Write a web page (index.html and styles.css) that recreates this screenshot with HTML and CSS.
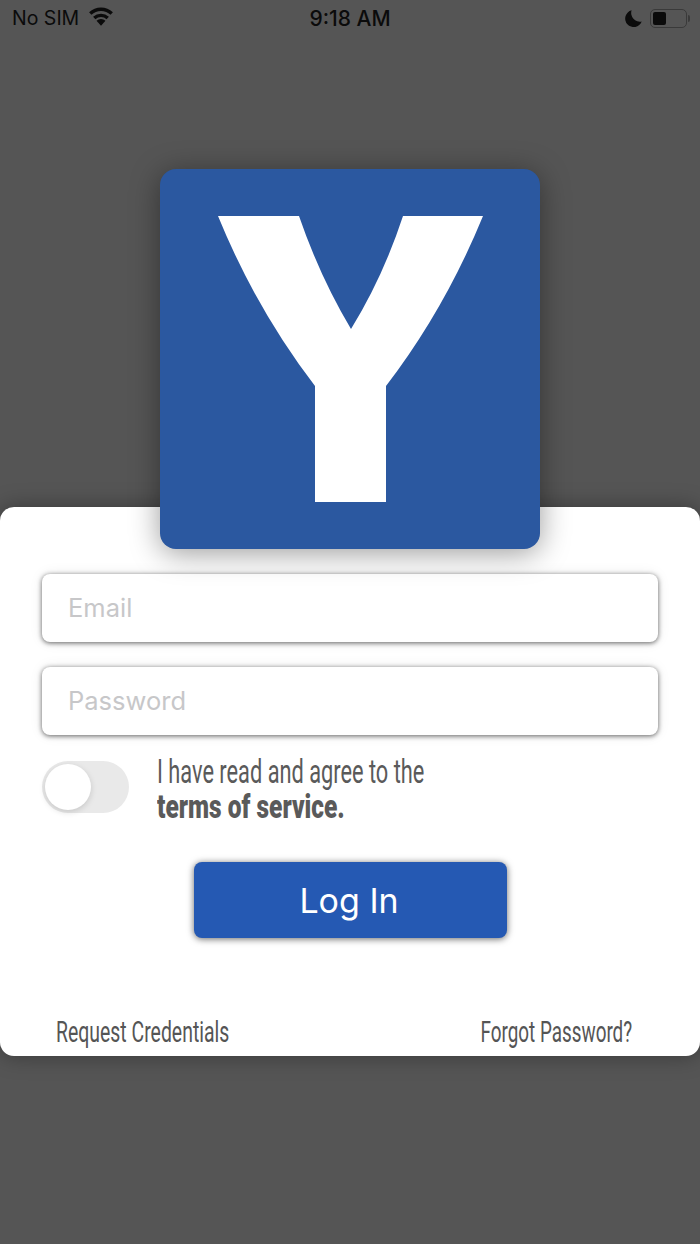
FILE: index.html
```html
<!DOCTYPE html>
<html lang="en">
<head>
  <meta charset="UTF-8">
  <title>Log In</title>
  <meta name="viewport" content="width=device-width, initial-scale=1.0">
  <link rel="stylesheet" href="styles.css">
</head>
<body>
<div class="status-bar">
  <div class="status-left">
    <span>No SIM</span>
    <svg class="wifi" width="26" height="19" viewBox="0 0 27 20">
      <path d="M13.5 19.8 L8.8 14.4 A7 7 0 0 1 18.2 14.4 Z" fill="#0b0b0b"/>
      <path d="M6.4 11.6 A10.4 10.4 0 0 1 20.6 11.6" fill="none" stroke="#0b0b0b" stroke-width="3.6"/>
      <path d="M2.2 6.9 A16.4 16.4 0 0 1 24.8 6.9" fill="none" stroke="#0b0b0b" stroke-width="3.6"/>
    </svg>
  </div>
  <div class="status-time">9:18 AM</div>
  <div class="status-right">
    <svg class="moon" width="17" height="17" viewBox="0 0 16 16">
      <path d="M6.2 0.3 A8 8 0 1 0 15.7 10.8 A8.2 8.2 0 0 1 6.2 0.3 Z" fill="#0b0b0b"/>
    </svg>
    <div class="battery"><div class="battery-level"></div></div>
    <div class="battery-cap"></div>
  </div>
</div>

<div class="login">
  <div class="logo">
    <svg width="380" height="380" viewBox="0 0 380 380">
      <path d="M58 47 L139 47 Q160 108 191 160 Q223 108 243 47 L323 47 Q285 140 226 217 L226 333 L155 333 L155 217 Q96 140 58 47 Z" fill="#fff"/>
    </svg>
  </div>

  <form class="card">
    <div class="field"><input type="text" placeholder="Email"></div>
    <div class="field"><input type="password" placeholder="Password"></div>

    <div class="terms">
      <div class="switch"><div class="knob"></div></div>
      <div class="terms-text">
        <div class="narrow terms-line">I have read and agree to the</div>
        <div class="narrow terms-bold">terms of service.</div>
      </div>
    </div>

    <div class="actions">
      <button type="button">Log In</button>
    </div>

    <div class="links">
      <a class="narrow link-left">Request Credentials</a>
      <a class="narrow link-right">Forgot Password?</a>
    </div>
  </form>
</div>
</body>
</html>
```

FILE: styles.css
```css
* {
  box-sizing: border-box;
}
body {
  margin: 0;
  height: 1244px;
  overflow: hidden;
  background: #555555;
  font-family: 'Inter', sans-serif;
}

/* Status bar */
.status-bar {
  height: 36px;
  display: flex;
  align-items: center;
  justify-content: space-between;
  padding: 0 10px 0 12px;
  color: #0b0b0b;
  font-size: 19.5px;
  position: relative;
}
.status-left {
  display: flex;
  align-items: center;
  gap: 9px;
}
.status-left .wifi {
  margin-top: -3px;
}
.status-time {
  position: absolute;
  left: 0;
  right: 0;
  text-align: center;
  font-size: 21px;
  font-weight: 500;
}
.status-right {
  display: flex;
  align-items: center;
}
.moon {
  margin-right: 8px;
}
.battery {
  width: 37px;
  height: 19px;
  border: 1.5px solid #3a3a3a;
  border-radius: 5px;
  padding: 2px;
}
.battery-level {
  width: 13px;
  height: 100%;
  background: #0b0b0b;
  border-radius: 2px;
}
.battery-cap {
  width: 2px;
  height: 7px;
  margin-left: 1px;
  background: #3a3a3a;
  border-radius: 0 2px 2px 0;
}

/* Logo and card */
.login {
  padding-top: 133px;
}
.logo {
  width: 380px;
  height: 380px;
  margin: 0 auto -42px;
  position: relative;
  z-index: 1;
  background: #2b58a0;
  border-radius: 16px;
  box-shadow: 0 4px 30px rgba(0,0,0,0.4);
}
.logo svg {
  display: block;
}
.card {
  height: 549px;
  background: #fff;
  border-radius: 14px;
  padding: 67px 42px 0;
  box-shadow: 0 0 22px rgba(0,0,0,0.35);
}
.field {
  margin-bottom: 25px;
}
.field input {
  display: block;
  width: 100%;
  height: 68px;
  padding: 0 26px 2px;
  border: none;
  border-radius: 8px;
  background: #fff;
  font-family: 'Inter', sans-serif;
  font-size: 25.5px;
  box-shadow: 0 1px 5px rgba(0,0,0,0.6), 0 0 14px rgba(0,0,0,0.08);
}
.field input::placeholder {
  color: #c7c7c9;
}

/* Terms row */
.terms {
  display: flex;
  align-items: center;
  gap: 28px;
  margin-top: -9px;
}
.switch {
  width: 87px;
  height: 52px;
  border-radius: 26px;
  background: #e9e9e9;
  padding: 3px;
}
.knob {
  width: 46px;
  height: 46px;
  border-radius: 50%;
  background: #fff;
  box-shadow: 0 2px 6px rgba(0,0,0,0.15);
}
.terms-text {
  line-height: 34px;
  color: #5a5a5a;
  padding-top: 4px;
}

/* No condensed family is installed, so the narrow labels are squeezed */
.narrow {
  display: block;
  font-family: 'Roboto', sans-serif;
  white-space: nowrap;
  transform-origin: left center;
}
.terms-line {
  font-size: 33px;
  font-weight: 400;
  transform: scaleX(0.66);
}
.terms-bold {
  font-size: 34px;
  font-weight: 900;
  transform: scaleX(0.72);
}

/* Button */
.actions {
  display: flex;
  justify-content: center;
  margin-top: 39px;
}
.actions button {
  width: 313px;
  height: 76px;
  padding: 0 2px 0 0;
  border: none;
  border-radius: 8px;
  background: #2559b3;
  color: #fff;
  font-family: 'Inter', sans-serif;
  font-size: 34px;
  box-shadow: 0 1px 7px rgba(0,0,0,0.6);
}

/* Bottom links */
.links {
  display: flex;
  justify-content: space-between;
  padding: 0 26px 0 14px;
  margin-top: 76px;
  font-size: 29px;
  line-height: 36px;
  color: #555;
}
.links .narrow {
  font-weight: 400;
  transform: scaleX(0.67);
}
.links .link-right {
  transform: scaleX(0.65);
  transform-origin: right center;
}
```
